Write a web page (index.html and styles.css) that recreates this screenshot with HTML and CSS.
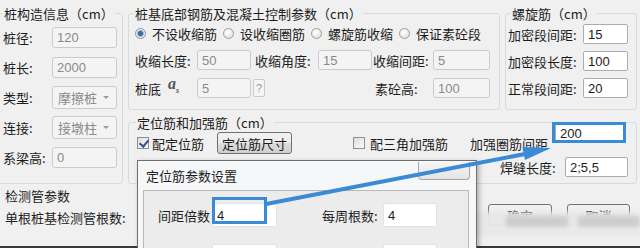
FILE: index.html
```html
<!DOCTYPE html>
<html lang="zh-CN">

<head>
    <meta charset="UTF-8" />
    <meta name="viewport" content="width=device-width, initial-scale=1.0" />
    <title>桩基参数</title>
    <link rel="stylesheet" href="styles.css">
</head>

<body>
    <div class="window">
        <div class="col-left">
            <fieldset class="group group-pile">
                <legend>桩构造信息（cm）</legend>
                <div class="field"><label>桩径:</label><input class="txt off w65" value="120" readonly></div>
                <div class="field"><label>桩长:</label><input class="txt off w65" value="2000" readonly></div>
                <div class="field"><label>类型:</label><div class="select">摩擦桩</div></div>
                <div class="field"><label>连接:</label><div class="select">接墩柱</div></div>
                <div class="field"><label>系梁高:</label><input class="txt off w65" value="0" readonly></div>
            </fieldset>
            <div class="tube">
                <div>检测管参数</div>
                <div class="tube-count">单根桩基检测管根数:</div>
            </div>
        </div>

        <div class="col-main">
            <div class="top-row">
                <fieldset class="group group-base">
                    <legend>桩基底部钢筋及混凝土控制参数（cm）</legend>
                    <div class="radios">
                        <span class="radio checked"><i class="dot"></i>不设收缩筋</span>
                        <span class="radio"><i class="dot"></i>设收缩圈筋</span>
                        <span class="radio"><i class="dot"></i>螺旋筋收缩</span>
                        <span class="radio"><i class="dot"></i>保证素砼段</span>
                    </div>
                    <div class="row row-shrink">
                        <label class="l62">收缩长度:</label><input class="txt off w54" value="50" readonly>
                        <label class="l63">收缩角度:</label><input class="txt off w54" value="15" readonly>
                        <label class="l60">收缩间距:</label><input class="txt off w57" value="5" readonly>
                    </div>
                    <div class="row row-bottom">
                        <label class="l33">桩底</label><span class="sym"><i>a</i><sub>s</sub></span>
                        <input class="txt off w54" value="5" readonly><span class="help">?</span>
                        <label class="l58 plain">素砼高:</label><input class="txt off w57" value="100" readonly>
                    </div>
                </fieldset>

                <fieldset class="group group-spiral">
                    <legend>螺旋筋（cm）</legend>
                    <div class="row"><label class="l75">加密段间距:</label><input class="txt w45" value="15"></div>
                    <div class="row"><label class="l75">加密段长度:</label><input class="txt w45" value="100"></div>
                    <div class="row"><label class="l75">正常段间距:</label><input class="txt w45" value="20"></div>
                </fieldset>
            </div>

            <fieldset class="group group-locate">
                <legend>定位筋和加强筋（cm）</legend>
                <div class="locate-row">
                    <span class="check checked"></span><span class="check-text">配定位筋</span>
                    <button class="btn btn-size">定位筋尺寸</button>
                    <span class="check check-tri"></span><span class="check-text tri-text">配三角加强筋</span>
                    <label class="ring-label">加强圈筋间距</label>
                    <input class="txt ring-input" value="200">
                </div>
                <div class="weld-row">
                    <label class="l65">焊缝长度:</label><input class="txt w63" value="2;5,5">
                </div>
            </fieldset>

            <div class="actions">
                <button class="btn btn-ok">确定</button>
                <button class="btn btn-cancel">取消</button>
            </div>
        </div>
    </div>

    <div class="smudge"><i></i><i></i></div>

    <div class="dialog">
        <div class="dialog-head">
            <span>定位筋参数设置</span>
            <span class="close"></span>
        </div>
        <div class="panel">
            <div class="panel-row">
                <label class="l54">间距倍数</label><input class="txt white w65 h24" value="4">
                <label class="l61 gap45">每周根数:</label><input class="txt white w54 h24" value="4">
            </div>
            <div class="panel-row second">
                <label class="l54"></label><input class="txt white w65 h24" value="">
                <label class="l61 gap45"></label><input class="txt white w54 h24" value="">
            </div>
        </div>
    </div>

    <div class="mark mark-ring"></div>
    <div class="mark mark-step"></div>

    <svg class="arrow" width="640" height="248" viewBox="0 0 640 248">
        <line x1="266" y1="204" x2="525" y2="154" stroke="#3a8ad6" stroke-width="4" />
        <polygon points="551,148 525,160 522.5,147" fill="#3a8ad6" />
    </svg>
</body>

</html>
```

FILE: styles.css
```css
* {
    box-sizing: border-box;
}

body {
    margin: 0;
    width: 640px;
    height: 248px;
    overflow: hidden;
    position: relative;
    background: #f0f0f0;
    font-family: "Noto Sans CJK SC", "Noto Sans", sans-serif;
    font-size: 13px;
    line-height: 17px;
    color: #1c1c1c;
}

.window {
    display: flex;
    height: 248px;
    padding-top: 5px;
    border-bottom: 2px solid #3a3a3a;
}

/* group boxes */
.group {
    margin: 0;
    padding: 0;
    border: 1px solid #d3dce2;
    border-radius: 3px;
    min-width: 0;
}

.group legend {
    padding: 0 1px;
    line-height: 17px;
}

label {
    flex: none;
    white-space: nowrap;
}

.txt {
    flex: none;
    height: 20px;
    margin: 0;
    padding: 0 4px;
    border: 1px solid #abadb3;
    border-radius: 2px;
    background: #fff;
    font-family: "Liberation Sans", Arial, sans-serif;
    font-size: 13px;
    color: #1c1c1c;
    outline: none;
}

.txt.off {
    border-color: #c9cccf;
    border-radius: 3px;
    background: #f4f4f4;
    color: #8a8a8a;
}

.w45 { width: 45px; }
.w54 { width: 54px; }
.w57 { width: 57px; }
.w63 { width: 63px; }
.w65 { width: 65px; }
.h24 { height: 24px; }

.l33 { width: 33px; }
.l54 { width: 54px; }
.l58 { width: 58px; }
.l60 { width: 60px; margin-left: 1px; }
.l61 { width: 61px; }
.l62 { width: 62px; }
.l63 { width: 63px; margin-left: 4px; }
.l65 { width: 65px; }
.l75 { width: 75px; }

/* left column */
.col-left {
    width: 123px;
    flex: none;
}

.group-pile {
    margin-left: -2px;
    width: 125px;
    height: 179px;
    padding: 0 0 0 4px;
}

.field {
    display: flex;
    align-items: center;
    height: 30px;
}

.group-pile .field label {
    width: 49px;
}

.group-pile .txt {
    height: 21px;
}

.select {
    position: relative;
    width: 65px;
    height: 23px;
    padding-left: 5px;
    border: 1px solid #c9cccf;
    border-radius: 3px;
    background: #f4f4f4;
    color: #8a8a8a;
    line-height: 21px;
}

.select::after {
    content: "";
    position: absolute;
    right: 7px;
    top: 9px;
    border-left: 3px solid transparent;
    border-right: 3px solid transparent;
    border-top: 3px solid #9a9a9a;
}

.tube {
    margin-top: 3px;
    padding-left: 5px;
    white-space: nowrap;
}

.tube-count {
    margin-top: 5px;
}

/* main column */
.col-main {
    margin-left: 5px;
    width: 509px;
    flex: none;
}

.top-row {
    display: flex;
    gap: 5px;
}

.group-base {
    width: 372px;
    height: 105px;
    padding: 0 0 0 6px;
}

.group-base legend {
    margin-left: -1px;
}

.radios {
    display: flex;
    align-items: center;
    height: 22px;
}

.radio {
    display: flex;
    align-items: center;
    width: 88px;
    white-space: nowrap;
}

.dot {
    width: 11px;
    height: 11px;
    margin-right: 6px;
    border: 1px solid #9c9c9c;
    border-radius: 50%;
    background: radial-gradient(circle at 40% 35%, #ffffff, #d9d9d9);
}

.radio.checked .dot {
    background: radial-gradient(circle, #3d5f86 0, #4f7aa6 2.5px, #dfe6ee 3.5px, #f5f5f5 100%);
    border-color: #8296ab;
}

.row {
    display: flex;
    align-items: center;
    height: 22px;
}

.row-shrink {
    margin-top: 5px;
}

.row-bottom {
    margin-top: 6px;
}

.sym {
    width: 29px;
    flex: none;
    color: #555;
    font-family: "Liberation Serif", serif;
    font-size: 16px;
    font-weight: bold;
    line-height: 16px;
}

.sym sub {
    font-size: 8px;
    font-style: italic;
}

.help {
    width: 12px;
    height: 18px;
    margin-left: 2px;
    border: 1px solid #c9cccf;
    border-radius: 2px;
    background: #f4f4f4;
    color: #9a9a9a;
    font-family: "Liberation Sans", sans-serif;
    font-size: 11px;
    line-height: 16px;
    text-align: center;
}

.plain {
    margin-left: 110px;
}

.group-spiral {
    width: 132px;
    height: 105px;
    padding: 0 0 0 2px;
}

.group-spiral legend {
    margin-left: 3px;
}

.group-spiral .row {
    margin-top: 5px;
}

.group-spiral .row:first-of-type {
    margin-top: 1px;
}

/* locate group */
.group-locate {
    margin-top: 4px;
    height: 70px;
    padding: 0 0 0 8px;
}

.group-locate legend {
    margin-left: -1px;
}

.locate-row {
    display: flex;
    align-items: center;
    height: 24px;
}

.check {
    position: relative;
    width: 12px;
    height: 12px;
    flex: none;
    border: 1px solid #8e8f8f;
    background: linear-gradient(135deg, #dcdcdc, #fbfbfb);
}

.check.checked::after {
    content: "";
    position: absolute;
    left: 3px;
    top: 0;
    width: 4px;
    height: 7px;
    border-right: 2px solid #35508f;
    border-bottom: 2px solid #35508f;
    transform: rotate(40deg);
}

.check-text {
    margin-left: 3px;
    white-space: nowrap;
}

.btn {
    height: 22px;
    margin: 0;
    padding: 0;
    border: 1px solid #707070;
    border-radius: 3px;
    background: linear-gradient(#f2f2f2, #ebebeb 50%, #dddddd 51%, #cfcfcf);
    font-family: "Noto Sans CJK SC", sans-serif;
    font-size: 13px;
    color: #1c1c1c;
}

.btn-size {
    width: 75px;
    margin-left: 13px;
}

.check-tri {
    margin-left: 61px;
}

.tri-text {
    margin-left: 5px;
}

.ring-label {
    margin-left: 22px;
}

.ring-input {
    width: 71px;
    margin-left: 7px;
    align-self: flex-start;
    margin-top: -8px;
}

.weld-row {
    display: flex;
    align-items: center;
    justify-content: flex-end;
    height: 20px;
    margin-top: 2px;
    padding-right: 8px;
}

.actions {
    display: flex;
    justify-content: flex-end;
    gap: 15px;
    margin-top: 20px;
    padding-right: 7px;
}

.btn-ok { width: 64px; }
.btn-cancel { width: 63px; }

/* watermark blur over the buttons */
.smudge {
    position: absolute;
    left: 466px;
    top: 212px;
    width: 174px;
    height: 24px;
    display: flex;
    gap: 10px;
    padding: 4px 0 0 40px;
    background: rgba(232, 232, 232, 0.96);
    filter: blur(2px);
}

.smudge i {
    width: 62px;
    height: 11px;
    background: #cdcdcd;
}

/* dialog on top */
.dialog {
    position: absolute;
    left: 137px;
    top: 160px;
    width: 340px;
    height: 88px;
    overflow: hidden;
    border: 1px solid #6f6f6f;
    border-bottom: none;
    background: #f5f7f9;
    box-shadow: 2px 2px 5px rgba(0, 0, 0, 0.3);
}

.dialog-head {
    display: flex;
    align-items: center;
    height: 29px;
    padding-left: 8px;
}

.close {
    align-self: flex-start;
    width: 52px;
    height: 18px;
    margin: 1px 6px 0 auto;
    border: 1px solid #a8a8a8;
    border-top: none;
    border-radius: 0 0 4px 4px;
    background: linear-gradient(#f7f7f7, #e4e4e4);
}

.panel {
    height: 58px;
    overflow: hidden;
    margin: 0 7px 0 5px;
    padding: 12px 0 0 14px;
    border: 1px solid #b8b8b8;
    border-bottom: none;
    background: #ececec;
}

.panel-row {
    display: flex;
    align-items: center;
    height: 24px;
}

.panel-row.second {
    margin-top: 17px;
}

.txt.white {
    border-color: #e2e3e5;
}

.gap45 {
    margin-left: 45px;
}

/* annotation marks */
.mark {
    position: absolute;
    border: 3px solid #3a8ad6;
}

.mark-ring {
    left: 552px;
    top: 122px;
    width: 74px;
    height: 21px;
}

.mark-step {
    left: 212px;
    top: 197px;
    width: 55px;
    height: 27px;
}

.arrow {
    position: absolute;
    left: 0;
    top: 0;
}
```
